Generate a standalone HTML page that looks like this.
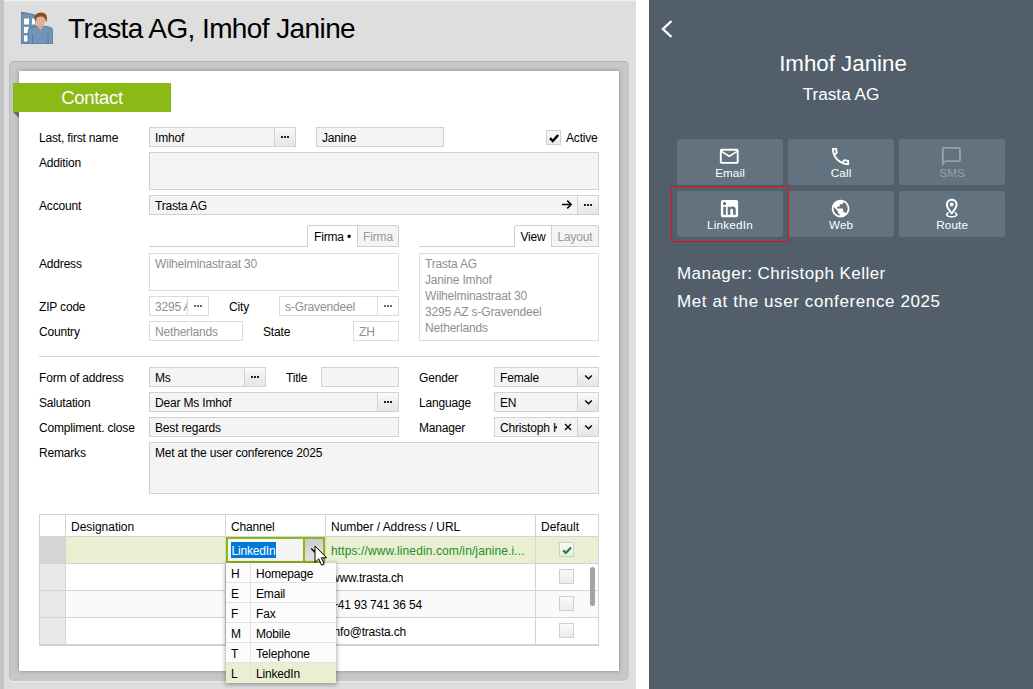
<!DOCTYPE html>
<html lang="en"><head><meta charset="utf-8"><title>Trasta AG, Imhof Janine</title>
<style>
*{box-sizing:border-box}
html,body{margin:0;padding:0}
body{width:1033px;height:689px;position:relative;overflow:hidden;background:#fff;font-family:"Liberation Sans",sans-serif;font-size:12px;color:#000}
.a{position:absolute}
.t{position:absolute;white-space:nowrap;font-size:12px;line-height:22px;height:20px;letter-spacing:-0.18px}
.f{position:absolute;border:1px solid #d2d2d2;background:#f4f4f4;height:20px;font-size:12px;line-height:20px;padding-left:5px;white-space:nowrap;overflow:hidden;letter-spacing:-0.18px}
.w{background:#fff;color:#8f8f8f;border-color:#dcdcdc}
.b{position:absolute;top:-1px;bottom:-1px;right:-1px;border:1px solid #d2d2d2;background:linear-gradient(#fafafa,#ececec 60%,#e6e6e6)}
.w .b{border-color:#dcdcdc;background:#fff}
.d{position:absolute;left:50%;top:8px;width:8px;height:2px;margin-left:-4px;background:linear-gradient(90deg,#222 0 2px,transparent 2px 3px,#222 3px 5px,transparent 5px 6px,#222 6px 8px)}
.w .d{background:linear-gradient(90deg,#666 0 2px,transparent 2px 3px,#666 3px 5px,transparent 5px 6px,#666 6px 8px)}
.cb{position:absolute;width:15px;height:15px;border:1px solid #cfcfcf;background:linear-gradient(#fafafa,#ececec)}
.tab{position:absolute;top:225px;height:22px;border:1px solid #cfcfcf;border-bottom:none;font-size:12px;line-height:22px;text-align:center;white-space:nowrap;letter-spacing:-0.18px}
.ti{background:#f4f4f4;color:#9a9a9a;height:21px}
.ta{background:#fff;color:#000}
.hl{position:absolute;height:1px;background:#cfcfcf}
.vl{position:absolute;width:1px;background:#d4d4d4}
.btn{position:absolute;width:105.5px;height:46.1px;background:#62737f;border-radius:3px}
.bl{position:absolute;left:0;width:106px;text-align:center;font-size:11.7px;line-height:14px;color:#fff;top:27.4px;letter-spacing:0.1px}
.dr{position:absolute;left:0;width:110px;height:20px;border-bottom:1px solid #e2e2e2;font-size:12px;line-height:23px;letter-spacing:-0.18px}
.dr i{position:absolute;left:0;top:0;width:25px;height:20px;border-right:1px solid #e2e2e2;font-style:normal;padding-left:5px}
.dr b{position:absolute;left:30px;top:0;font-weight:normal}
</style></head>
<body>
<div class="a" style="left:0;top:0;width:636px;height:689px;background:#dedede"></div>
<div class="a" style="left:0;top:0;width:636px;height:1px;background:#efefef"></div>
<div class="a" style="left:0;top:0;width:4px;height:689px;background:#c4c4c4"></div>
<svg class="a" style="left:21px;top:12px" width="32" height="32" viewBox="0 0 32 32">
<path d="M0 0 L14 3 L14 32 L0 32 Z" fill="#6f93b5"/>
<path d="M0 0 L14 3 L14 32 L0 32 Z" fill="none" stroke="#4d7499" stroke-width="1"/>
<rect x="3" y="6.5" width="5" height="6" fill="#fff"/><rect x="11" y="6.5" width="3" height="6" fill="#fff"/>
<rect x="3" y="15" width="5" height="6" fill="#fff"/>
<rect x="3" y="23.5" width="4" height="6" fill="#fff"/>
<path d="M7 32 V19.5 Q7 15.5 11 15 L16 14 L19.5 19 L23 14 L28 15 Q32 15.5 32 19.5 V32 Z" fill="#7195b7" stroke="#4d7499" stroke-width="0.8"/>
<path d="M11.5 32 V22 M27 32 V22" stroke="#4d7499" stroke-width="0.8" fill="none"/>
<path d="M16 13 L19.5 19 L23 13 L22 10 H17 Z" fill="#dca88c"/>
<ellipse cx="19.5" cy="8" rx="5" ry="6" fill="#e2b196"/>
<path d="M13.5 7.5 Q13 1 19.5 0.5 Q26 0.5 26 6 Q26 9 25 10 Q24.5 5 21 4.5 Q17 4 15.5 6 Q15 8 14.5 9.5 Z" fill="#8a4a1c"/>
</svg>
<div class="a" style="left:68px;top:12px;font-size:28px;line-height:34px;white-space:nowrap;letter-spacing:-0.6px">Trasta AG, Imhof Janine</div>
<div class="a" style="left:9px;top:61px;width:620px;height:620px;background:#c7c7c7;border-radius:5px;border-top:1px solid #b2b2b2;border-left:1px solid #bababa;box-shadow:0 1px 0 #ebebeb"></div>
<div class="a" style="left:19px;top:71px;width:600px;height:600px;background:#fff;box-shadow:0 0 4px rgba(0,0,0,.32)"></div>
<div class="a" style="left:13px;top:112px;width:0;height:0;border-left:6px solid transparent;border-top:6px solid #5d6f63"></div>
<div class="a" style="left:13px;top:83px;width:158px;height:29px;background:#8bb916;color:#fff;font-size:18.5px;line-height:29px;text-align:center;letter-spacing:-0.3px">Contact</div>
<div class="t" style="left:39px;top:127px;">Last, first name</div>
<div class="f " style="left:149px;top:127px;width:147px;height:20px;">Imhof<span class="b" style="width:22px"><span class="d"></span></span></div>
<div class="f " style="left:316px;top:127px;width:128px;height:20px;">Janine</div>
<div class="cb" style="left:546px;top:130px"><svg class="a" style="left:1px;top:1px" width="12" height="12" viewBox="0 0 12 12"><path d="M2 6.2 L4.8 9 L10.2 3" fill="none" stroke="#000" stroke-width="2.4"/></svg></div>
<div class="t" style="left:566px;top:127px;">Active</div>
<div class="t" style="left:39px;top:152px;">Addition</div>
<div class="f " style="left:149px;top:152px;width:450px;height:38px;"></div>
<div class="t" style="left:39px;top:195px;">Account</div>
<div class="f " style="left:149px;top:195px;width:450px;height:20px;">Trasta AG<span class="b" style="width:22px"><span class="d"></span></span></div>
<svg class="a" style="left:561px;top:199px" width="12" height="12" viewBox="0 0 12 12"><path d="M1 5.5 H10 M6.2 1.6 L10.2 5.5 L6.2 9.4" fill="none" stroke="#000" stroke-width="1.5"/></svg>
<div class="hl" style="left:149px;top:246px;width:250px"></div>
<div class="hl" style="left:419px;top:246px;width:180px"></div>
<div class="tab ta" style="left:307px;width:51px;border-radius:3px 0 0 0">Firma •</div>
<div class="tab ti" style="left:357px;width:42px;border-radius:0 3px 0 0">Firma</div>
<div class="tab ta" style="left:514px;width:38px;border-radius:3px 0 0 0">View</div>
<div class="tab ti" style="left:551px;width:48px;border-radius:0 3px 0 0">Layout</div>
<div class="t" style="left:39px;top:253px;">Address</div>
<div class="f w" style="left:149px;top:253px;width:250px;height:38px;">Wilhelminastraat 30</div>
<div class="t" style="left:39px;top:296px;">ZIP code</div>
<div class="f w" style="left:149px;top:296px;width:60px;height:20px;">3295 AZ<span class="b" style="width:22px"><span class="d"></span></span></div>
<div class="t" style="left:229px;top:296px;">City</div>
<div class="f w" style="left:279px;top:296px;width:120px;height:20px;">s-Gravendeel<span class="b" style="width:22px"><span class="d"></span></span></div>
<div class="t" style="left:39px;top:321px;">Country</div>
<div class="f w" style="left:149px;top:321px;width:94px;height:20px;">Netherlands</div>
<div class="t" style="left:263px;top:321px;">State</div>
<div class="f w" style="left:353px;top:321px;width:46px;height:20px;">ZH</div>
<div class="f w" style="left:419px;top:253px;width:180px;height:88px;line-height:16px;padding-top:2px">Trasta AG<br>Janine Imhof<br>Wilhelminastraat 30<br>3295 AZ s-Gravendeel<br>Netherlands</div>
<div class="hl" style="left:39px;top:356px;width:560px;background:#d4d4d4"></div>
<div class="t" style="left:39px;top:367px;">Form of address</div>
<div class="f " style="left:149px;top:367px;width:117px;height:20px;">Ms<span class="b" style="width:22px"><span class="d"></span></span></div>
<div class="t" style="left:286px;top:367px;">Title</div>
<div class="f " style="left:321px;top:367px;width:78px;height:20px;"></div>
<div class="t" style="left:419px;top:367px;">Gender</div>
<div class="t" style="left:39px;top:392px;">Salutation</div>
<div class="f " style="left:149px;top:392px;width:250px;height:20px;">Dear Ms Imhof<span class="b" style="width:22px"><span class="d"></span></span></div>
<div class="t" style="left:419px;top:392px;">Language</div>
<div class="t" style="left:39px;top:417px;">Compliment. close</div>
<div class="f " style="left:149px;top:417px;width:250px;height:20px;">Best regards</div>
<div class="t" style="left:419px;top:417px;">Manager</div>
<div class="t" style="left:39px;top:442px;">Remarks</div>
<div class="f " style="left:149px;top:442px;width:450px;height:52px;">Met at the user conference 2025</div>
<div class="f" style="left:494px;top:367px;width:105px"><span class="a" style="left:5px;top:0;width:56.5px;overflow:hidden;height:18px">Female</span><span class="b" style="width:22px"><svg class="a" style="left:6px;top:5.5px" width="9" height="7" viewBox="0 0 9 7"><path d="M1.2 1.4 L4.5 4.7 L7.8 1.4" fill="none" stroke="#000" stroke-width="1.45"/></svg></span></div>
<div class="f" style="left:494px;top:392px;width:105px"><span class="a" style="left:5px;top:0;width:56.5px;overflow:hidden;height:18px">EN</span><span class="b" style="width:22px"><svg class="a" style="left:6px;top:5.5px" width="9" height="7" viewBox="0 0 9 7"><path d="M1.2 1.4 L4.5 4.7 L7.8 1.4" fill="none" stroke="#000" stroke-width="1.45"/></svg></span></div>
<div class="f" style="left:494px;top:417px;width:105px"><span class="a" style="left:5px;top:0;width:56.5px;overflow:hidden;height:18px">Christoph Keller</span><svg class="a" style="left:69px;top:4.5px" width="8" height="8" viewBox="0 0 8 8"><path d="M1 1 L7 7 M7 1 L1 7" stroke="#000" stroke-width="1.35"/></svg><span class="b" style="width:22px"><svg class="a" style="left:6px;top:5.5px" width="9" height="7" viewBox="0 0 9 7"><path d="M1.2 1.4 L4.5 4.7 L7.8 1.4" fill="none" stroke="#000" stroke-width="1.45"/></svg></span></div>
<div class="a" style="left:39px;top:514px;width:560px;height:132px;background:#fff;border:1px solid #d4d4d4;border-bottom:2px solid #d2d2d2"></div>
<div class="a" style="left:40px;top:537px;width:558px;height:26px;background:#e8f0d1"></div>
<div class="a" style="left:40px;top:591px;width:558px;height:26px;background:#fafafa"></div>
<div class="a" style="left:40px;top:537px;width:25px;height:26px;background:#d5d5d5"></div>
<div class="a" style="left:40px;top:564px;width:25px;height:80px;background:#e8e8e8"></div>
<div class="hl" style="left:40px;top:536px;width:558px;background:#d4d4d4"></div>
<div class="hl" style="left:40px;top:563px;width:558px;background:#d4d4d4"></div>
<div class="hl" style="left:40px;top:590px;width:558px;background:#d4d4d4"></div>
<div class="hl" style="left:40px;top:617px;width:558px;background:#d4d4d4"></div>
<div class="vl" style="left:65px;top:515px;height:129px"></div>
<div class="vl" style="left:225px;top:515px;height:129px"></div>
<div class="vl" style="left:325px;top:515px;height:129px"></div>
<div class="vl" style="left:535px;top:515px;height:129px"></div>
<div class="t" style="left:71px;top:516px;letter-spacing:-0.02px">Designation</div>
<div class="t" style="left:231px;top:516px;">Channel</div>
<div class="t" style="left:331px;top:516px;letter-spacing:-0.04px">Number / Address / URL</div>
<div class="t" style="left:541px;top:516px;letter-spacing:0px">Default</div>
<div class="t" style="left:331px;top:540px;color:#238c2a;letter-spacing:0.11px">https://www.linedin.com/in/janine.i...</div>
<div class="t" style="left:331px;top:567px;">www.trasta.ch</div>
<div class="t" style="left:331px;top:594px;">+41 93 741 36 54</div>
<div class="t" style="left:331px;top:621px;">info@trasta.ch</div>
<div class="cb" style="left:559px;top:542px"><svg class="a" style="left:1px;top:1px" width="12" height="12" viewBox="0 0 12 12"><path d="M2.2 6.4 L4.8 9 L10 3.4" fill="none" stroke="#1c8a1c" stroke-width="2.2"/></svg></div>
<div class="cb" style="left:559px;top:569px"></div>
<div class="cb" style="left:559px;top:596px"></div>
<div class="cb" style="left:559px;top:623px"></div>
<div class="a" style="left:590px;top:567px;width:5px;height:39px;border-radius:3px;background:#a3a3a3"></div>
<div class="a" style="left:226px;top:537px;width:99px;height:26px;background:#f4f4f4;border:2px solid #8bb916"></div>
<div class="a" style="left:303px;top:539px;width:2px;height:22px;background:#8bb916"></div>
<div class="a" style="left:305px;top:539px;width:18px;height:22px;background:linear-gradient(170deg,#c9c9c9,#e6e6e6)"></div>
<svg class="a" style="left:310px;top:547px" width="9" height="7" viewBox="0 0 9 7"><path d="M1.2 1.4 L4.5 4.7 L7.8 1.4" fill="none" stroke="#000" stroke-width="1.45"/></svg>
<div class="a" style="left:231px;top:542px;width:45px;height:16px;background:#0078d7"></div>
<div class="t" style="left:231.5px;top:540px;color:#fff">LinkedIn</div>
<div class="a" style="left:226px;top:563px;width:109.5px;height:120px;background:#fcfcfc;box-shadow:0 1px 4px 1px rgba(0,0,0,.3)">
<div class="dr" style="top:0px"><i>H</i><b>Homepage</b></div>
<div class="dr" style="top:20px"><i>E</i><b>Email</b></div>
<div class="dr" style="top:40px"><i>F</i><b>Fax</b></div>
<div class="dr" style="top:60px"><i>M</i><b>Mobile</b></div>
<div class="dr" style="top:80px"><i>T</i><b>Telephone</b></div>
<div class="dr" style="top:100px;background:#e8f0d1;border-bottom:none"><i>L</i><b>LinkedIn</b></div>
</div>
<svg class="a" style="left:313.5px;top:545px" width="14" height="22" viewBox="0 0 14 22"><path d="M1 1 V17.5 L4.8 13.8 L7.6 20.2 L10.2 19.1 L7.4 12.8 H12.6 Z" fill="#fff" stroke="#000" stroke-width="1" stroke-linejoin="miter"/></svg>
<div class="a" style="left:649px;top:0;width:384px;height:689px;background:#525f6b;color:#fff">
<svg class="a" style="left:9px;top:17px" width="18" height="24" viewBox="0 0 18 24"><path d="M13.5 4 L5 12 L13.5 20" fill="none" stroke="#fff" stroke-width="2.4"/></svg>
<div class="a" style="left:0;top:50px;width:388px;text-align:center;font-size:22.3px;line-height:28px;white-space:nowrap">Imhof Janine</div>
<div class="a" style="left:0;top:83px;width:384px;text-align:center;font-size:17.2px;line-height:22px;white-space:nowrap">Trasta AG</div>
<div class="btn" style="left:28px;top:138.6px"><svg class="a" style="left:41.25px;top:6.8px" width="22.5" height="22.5" viewBox="0 0 24 24" fill="#fff"><path d="M20 4H4c-1.1 0-1.99.9-1.99 2L2 18c0 1.1.9 2 2 2h16c1.1 0 2-.9 2-2V6c0-1.1-.9-2-2-2zm0 14H4V8l8 5 8-5v10zm-8-7L4 6h16l-8 5z"/></svg><div class="bl" style="color:#fff;letter-spacing:0.1px">Email</div></div>
<div class="btn" style="left:139.1px;top:138.6px"><svg class="a" style="left:41.20px;top:6.4px" width="23" height="23" viewBox="0 0 24 24" fill="#fff"><path d="M6.54 5c.06.89.21 1.76.45 2.59l-1.2 1.2c-.41-1.2-.67-2.47-.76-3.79h1.51m9.86 12.02c.85.24 1.72.39 2.6.45v1.49c-1.32-.09-2.59-.35-3.8-.75l1.2-1.19M7.5 3H4c-.55 0-1 .45-1 1 0 9.39 7.61 17 17 17 .55 0 1-.45 1-1v-3.49c0-.55-.45-1-1-1-1.24 0-2.45-.2-3.57-.57-.1-.04-.21-.05-.31-.05-.26 0-.51.1-.71.29l-2.2 2.2c-2.83-1.45-5.15-3.76-6.59-6.59l2.2-2.2c.28-.28.36-.67.25-1.02C8.7 6.45 8.5 5.25 8.5 4c0-.55-.45-1-1-1z"/></svg><div class="bl" style="color:#fff;letter-spacing:0.1px">Call</div></div>
<div class="btn" style="left:250.2px;top:138.6px"><svg class="a" style="left:41.30px;top:6.2px" width="22.8" height="22.8" viewBox="0 0 24 24" fill="#93a2ad"><path d="M20 2H4c-1.1 0-2 .9-2 2v18l4-4h14c1.1 0 2-.9 2-2V4c0-1.1-.9-2-2-2zm0 14H6l-2 2V4h16v12z"/></svg><div class="bl" style="color:#93a2ad;letter-spacing:0.1px">SMS</div></div>
<div class="btn" style="left:28px;top:190.6px"><svg class="a" style="left:41.00px;top:6.1px" width="23" height="23" viewBox="0 0 24 24" fill="#fff"><path d="M19 3A2 2 0 0 1 21 5V19A2 2 0 0 1 19 21H5A2 2 0 0 1 3 19V5A2 2 0 0 1 5 3H19M18.5 18.5V13.2A3.26 3.26 0 0 0 15.24 9.94C14.39 9.94 13.4 10.46 12.92 11.24V10.13H10.13V18.5H12.92V13.57C12.92 12.8 13.54 12.17 14.31 12.17A1.4 1.4 0 0 1 15.71 13.57V18.5H18.5M6.88 8.56A1.68 1.68 0 0 0 8.56 6.88C8.56 5.95 7.81 5.19 6.88 5.19A1.69 1.69 0 0 0 5.19 6.88C5.19 7.81 5.95 8.56 6.88 8.56M8.27 18.5V10.13H5.5V18.5H8.27Z"/></svg><div class="bl" style="color:#fff;letter-spacing:0.25px">LinkedIn</div></div>
<div class="btn" style="left:139.1px;top:190.6px"><svg class="a" style="left:42.30px;top:7.2px" width="21.2" height="21.2" viewBox="0 0 24 24" fill="#fff"><path d="M12 2C6.48 2 2 6.48 2 12s4.48 10 10 10 10-4.48 10-10S17.52 2 12 2zm-1 17.93c-3.95-.49-7-3.85-7-7.93 0-.62.08-1.21.21-1.79L9 15v1c0 1.1.9 2 2 2v1.93zm6.9-2.54c-.26-.81-1-1.39-1.9-1.39h-1v-3c0-.55-.45-1-1-1H8v-2h2c.55 0 1-.45 1-1V7h2c1.1 0 2-.9 2-2v-.41c2.93 1.19 5 4.06 5 7.41 0 2.08-.8 3.97-2.1 5.39z"/></svg><div class="bl" style="color:#fff;letter-spacing:0.1px">Web</div></div>
<div class="btn" style="left:250.2px;top:190.6px"><svg class="a" style="left:42.05px;top:6.4px" width="21.5" height="21.5" viewBox="0 0 24 24" fill="#fff"><path d="M12 4.2C14.4 4.2 16.3 6.1 16.3 8.4C16.3 10.6 14 14.2 12 16.7C10 14.1 7.7 10.6 7.7 8.4C7.7 6.1 9.6 4.2 12 4.2M12 2C8.4 2 5.5 4.9 5.5 8.4C5.5 13.2 12 20 12 20S18.5 13.1 18.5 8.4C18.5 4.9 15.6 2 12 2M12 6.2C10.8 6.2 9.8 7.2 9.8 8.4S10.8 10.6 12 10.6 14.2 9.6 14.2 8.4 13.2 6.2 12 6.2M18.5 19.6C18.5 21.5 15.6 23 12 23S5.5 21.5 5.5 19.6C5.5 18.4 6.6 17.4 8.3 16.8L9 17.9C8.1 18.3 7.5 18.8 7.5 19.4C7.5 20.5 9.5 21.3 12 21.3S16.5 20.5 16.5 19.4C16.5 18.8 15.9 18.3 15 17.9L15.7 16.8C17.4 17.4 18.5 18.4 18.5 19.6Z"/></svg><div class="bl" style="color:#fff;letter-spacing:0.1px">Route</div></div>
<div class="a" style="left:22px;top:186px;width:118px;height:56px;border:1px solid #f00c0c;border-radius:1.5px"></div>
<div class="a" style="left:28px;top:263px;font-size:17px;line-height:22px;white-space:nowrap;letter-spacing:0.45px">Manager: Christoph Keller</div>
<div class="a" style="left:28px;top:291px;font-size:17px;line-height:22px;white-space:nowrap;letter-spacing:0.61px">Met at the user conference 2025</div>
</div>
</body></html>
